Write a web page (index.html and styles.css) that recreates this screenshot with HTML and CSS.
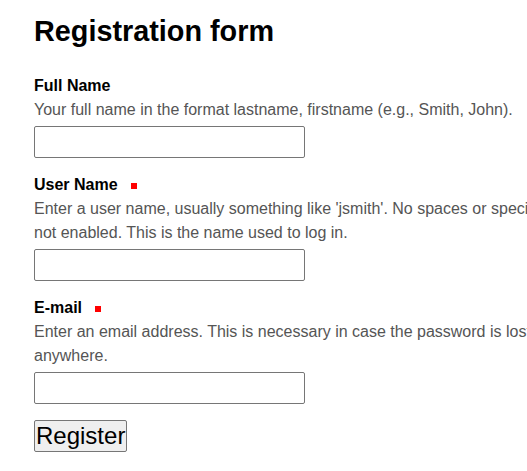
FILE: index.html
```html
<!DOCTYPE html>
<html lang="en">
	<head>
		<title>Registration form</title>
		<meta charset="UTF-8" />
		<link rel="stylesheet" href="styles.css">
	</head>
	<body>
		<div class="page">
			<h1 class="title">Registration form</h1>
			<form class="regForm" action="#" onsubmit="return false;">
				<div class="field">
					<label class="fieldLabel" for="fullName">Full Name</label>
					<div class="fieldDesc">Your full name in the format lastname, firstname (e.g., Smith, John).</div>
					<input class="fieldInput" type="text" id="fullName" name="fullName" />
				</div>
				<div class="field">
					<label class="fieldLabel" for="userName">User Name <span class="required"></span></label>
					<div class="fieldDesc">Enter a user name, usually something like 'jsmith'. No spaces or special characters if unicode is not enabled. This is the name used to log in.</div>
					<input class="fieldInput" type="text" id="userName" name="userName" />
				</div>
				<div class="field">
					<label class="fieldLabel" for="email">E-mail <span class="required"></span></label>
					<div class="fieldDesc">Enter an email address. This is necessary in case the password is lost. It is not displayed anywhere.</div>
					<input class="fieldInput" type="text" id="email" name="email" />
				</div>
				<div class="controlButtons">
					<button class="submitButton" type="submit">Register</button>
				</div>
			</form>
		</div>
	</body>
</html>
```

FILE: styles.css
```css
html, body {
	margin: 0px;
	padding: 0px;
	overflow: hidden;
	font-family: "Liberation Sans", Arial, sans-serif;
	font-size: 16px;
	color: #000;
	background: #fff;
}
.page {
	width: 685px;
	padding: 15px 34px 12px 34px;
}
.title {
	margin: 0px 0px 26px 0px;
	font-size: 1.8em;
	font-weight: bold;
}
.field {
	margin-bottom: 15px;
}
.fieldLabel {
	display: block;
	line-height: 24px;
	font-weight: bold;
}
/* little red box for required fields */
.required {
	display: inline-block;
	width: 6px;
	height: 6px;
	margin-left: 9px;
	background: #f00;
	vertical-align: 1px;
}
.fieldDesc {
	line-height: 24px;
	color: #555;
}
.fieldInput {
	display: block;
	box-sizing: border-box;
	width: 271px;
	height: 32px;
	margin-top: 4px;
	border: 1px solid #767676;
	border-radius: 2px;
	font-size: 16px;
}
.controlButtons {
	margin-top: 16px;
}
.submitButton {
	box-sizing: border-box;
	height: 32px;
	padding: 0px 1px;
	border: 1px solid #767676;
	border-radius: 2px;
	background: #efefef;
	font-family: "Liberation Sans", Arial, sans-serif;
	font-size: 24px;
	line-height: 28px;
	color: #000;
}
```
